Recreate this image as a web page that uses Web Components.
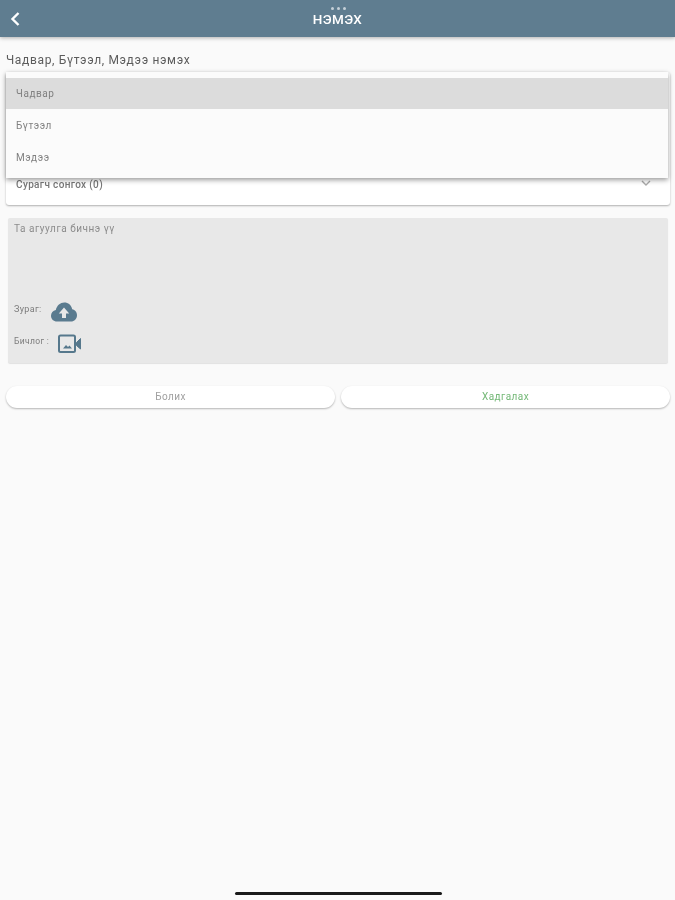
<!DOCTYPE html>
<html><head><meta charset="utf-8">
<style>
html,body{margin:0;padding:0;background:#fafafa;}
body{width:675px;height:900px;position:relative;overflow:hidden;font-family:Roboto,"Liberation Sans",sans-serif;}
</style></head><body>
<app-bar>НЭМЭХ</app-bar>
<page-main>
  <section-title>Чадвар, Бүтээл, Мэдээ нэмэх</section-title>
  <select-card>Сурагч сонгох (0)</select-card>
  <compose-panel placeholder="Та агуулга бичнэ үү"></compose-panel>
  <action-row>
    <action-button>Болих</action-button>
    <action-button tone="green">Хадгалах</action-button>
  </action-row>
</page-main>
<drop-menu>
  <menu-item selected>Чадвар</menu-item>
  <menu-item>Бүтээл</menu-item>
  <menu-item>Мэдээ</menu-item>
</drop-menu>
<home-bar></home-bar>
<script>
function def(name, html){
  customElements.define(name, class extends HTMLElement{
    constructor(){super();this.attachShadow({mode:'open'}).innerHTML=typeof html==='function'?html(this):html;}
  });
}
def('app-bar',`<style>
:host{display:flex;align-items:center;justify-content:center;height:37px;background:#5f7d90;position:relative;box-shadow:0 1px 4px rgba(0,0,0,.3);color:#fff;font-size:13.5px;font-weight:500;letter-spacing:.35px;}
svg.b{position:absolute;left:9px;top:11px}
.d{position:absolute;left:331px;top:7px;display:flex;gap:3px}
.d i{width:3px;height:3px;border-radius:50%;background:#c5d0d8}
span{filter:blur(.45px);padding-top:1px}
</style><svg class="b" width="12" height="16" viewBox="0 0 12 16"><path d="M9.5 2 L3.5 8 L9.5 14" fill="none" stroke="#fff" stroke-width="2.4"/></svg><div class="d"><i></i><i></i><i></i></div><span><slot></slot></span>`);
def('page-main',`<style>:host{display:block;padding:0 5px 0 6px}</style><slot></slot>`);
def('section-title',`<style>:host{display:block;height:35px;padding-top:16px;box-sizing:border-box;font-size:12px;line-height:15px;letter-spacing:.66px;color:#5c5c5c;filter:blur(.5px)}</style><slot></slot>`);
def('select-card',`<style>
:host{display:flex;justify-content:space-between;align-items:flex-start;height:133px;box-sizing:border-box;background:#fff;border-radius:3px;box-shadow:0 1px 2px rgba(0,0,0,.3);padding:107px 19px 0 10px;font-size:10px;font-weight:500;letter-spacing:.35px;line-height:12px;color:#777;}
span{filter:blur(.5px)}
svg{margin-top:1px}
</style><span><slot></slot></span><svg width="10" height="7" viewBox="0 0 10 7"><path d="M1 1 L5 5 L9 1" fill="none" stroke="#aaa" stroke-width="1.4"/></svg>`);
def('compose-panel',el=>`<style>
:host{display:block;margin:13px 2px 0 2px;height:145px;box-sizing:border-box;background:#e8e8e8;border-radius:2px;box-shadow:0 1px 1px rgba(0,0,0,.1);padding:5px 6px;color:#8c8c8c;}
.ph{font-size:10px;line-height:12px;filter:blur(.5px);letter-spacing:.55px}
.row{display:flex;align-items:flex-start}
.r1{margin-top:67px;height:32px}
.r2{height:24px}
.l{font-size:9px;line-height:10px;color:#7c7c7c;filter:blur(.45px);letter-spacing:.35px}
.r1 .l{width:37px;padding-top:2px}
.r2 .l{width:44px;font-size:8.5px;padding-top:2px}
</style><div class="ph">${el.getAttribute('placeholder')||''}</div>
<div class="row r1"><span class="l">Зураг:</span><svg width="26" height="20" viewBox="0 0 26 20"><path fill-rule="evenodd" fill="#5a7b8f" d="M6 19.500C2.600 19.500 0 17 0 13.700 0 10.800 2 8.500 4.800 8 5.900 3.400 9.300 .5 13.300 .5 17.200 .5 20.400 3.200 21.200 7.200 23.900 7.700 26 10.100 26 13.200 26 16.700 23.300 19.500 20 19.500ZM13 5.500 7.800 11.500H11V16H15V11.500H18.200Z"/></svg></div>
<div class="row r2"><span class="l">Бичлог :</span><svg width="24" height="20" viewBox="0 0 24 20"><rect x="1" y="1.500" width="16" height="16.500" rx="1.500" fill="none" stroke="#56788c" stroke-width="2"/><path d="M5 14.500 8 11 10 13 11.500 11.500 14 14.500Z" fill="#56788c"/><path d="M18.500 8.500 22.500 4.500V15L18.500 11.500Z" fill="#56788c" stroke="#56788c"/></svg></div>`);
def('action-row',`<style>:host{display:grid;grid-template-columns:1fr 1fr;gap:6px;margin-top:23px}</style><slot></slot>`);
def('action-button',el=>`<style>
:host{display:flex;align-items:center;justify-content:center;height:22px;background:#fff;border-radius:11px;box-shadow:0 1px 2px rgba(0,0,0,.28);font-size:10px;letter-spacing:.45px;color:${el.getAttribute('tone')==='green'?'#74b877':'#a0a0a0'};}
span{filter:blur(.5px);margin-top:-1px}
</style><span><slot></slot></span>`);
def('drop-menu',`<style>
:host{display:block;position:absolute;left:6px;top:72px;width:662px;height:106px;padding-top:6px;box-sizing:border-box;background:#fbfbfb;box-shadow:0 2px 5px rgba(0,0,0,.4);}
</style><slot></slot>`);
def('menu-item',el=>`<style>
:host{display:flex;align-items:center;height:${el.hasAttribute('selected')?31:32}px;box-sizing:border-box;padding-left:10px;font-size:10px;letter-spacing:.55px;color:#808080;background:${el.hasAttribute('selected')?'#dcdcdc':'transparent'};}
span{filter:blur(.5px)}
</style><span><slot></slot></span>`);
def('home-bar',`<style>:host{display:block;position:absolute;left:235px;top:892px;width:207px;height:3px;border-radius:2px;background:#1a1a1a}</style>`);
</script>
</body></html>
